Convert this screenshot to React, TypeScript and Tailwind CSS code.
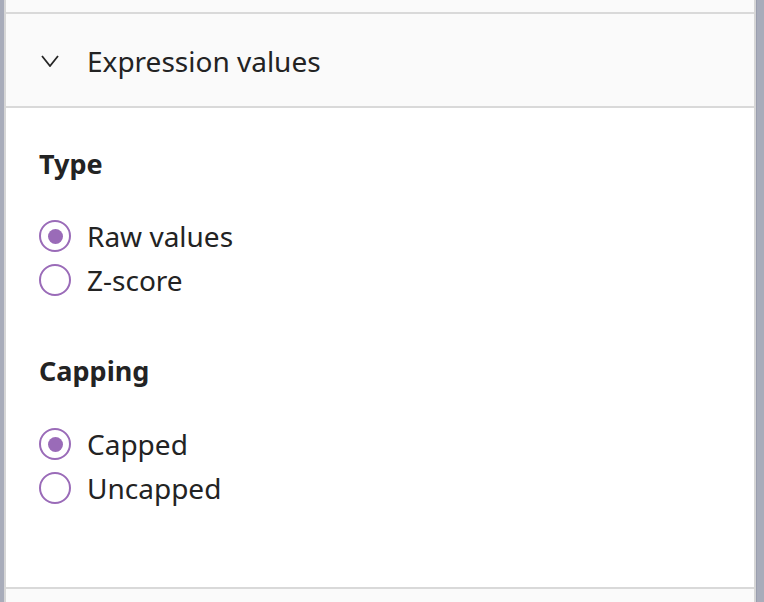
import React from "react";

function Radio({ checked, label }: { checked: boolean; label: string }) {
  return (
    <div className="flex items-center h-[44px]">
      <div className="w-[32px] h-[32px] rounded-full border-2 border-[#9a6bb8] flex items-center justify-center">
        {checked && <div className="w-[15px] h-[15px] rounded-full bg-[#9a6bb8]" />}
      </div>
      <span className="ml-[16px] text-[28px] leading-[34px] text-[#232323]">{label}</span>
    </div>
  );
}

export default function App() {
  return (
    <div
      className="w-[764px] h-[602px] flex bg-[#fafafa] overflow-hidden"
      style={{ fontFamily: '"Noto Sans", "Open Sans", sans-serif' }}
    >
      <div className="w-[4px] bg-[#a8acba]" />
      <div className="w-[2px] bg-[#d6d6d6]" />
      <div className="flex-1 flex flex-col">
        <div className="h-[12px] bg-[#fafafa]" />
        <div className="h-[2px] bg-[#d9d9d9]" />
        <div className="h-[92px] bg-[#fafafa] flex items-center pl-[35px]">
          <svg width="18" height="12" viewBox="0 0 18 12" fill="none" className="mt-[2px]">
            <path d="M1 1 L9 11 L17 1" stroke="#262626" strokeWidth="1.8" />
          </svg>
          <span className="ml-[28px] mt-[2px] text-[28px] leading-[36px] text-[#232323]">Expression values</span>
        </div>
        <div className="h-[2px] bg-[#d9d9d9]" />
        <div className="h-[479px] bg-white pl-[33px] pt-[39px]">
          <div className="text-[27px] font-bold text-[#232323] leading-[34px]">Type</div>
          <div className="mt-[33px]">
            <Radio checked label="Raw values" />
            <Radio checked={false} label="Z-score" />
          </div>
          <div className="mt-[52px] text-[27px] font-bold text-[#232323] leading-[34px]">Capping</div>
          <div className="mt-[34px]">
            <Radio checked label="Capped" />
            <Radio checked={false} label="Uncapped" />
          </div>
        </div>
        <div className="h-[2px] bg-[#d9d9d9]" />
        <div className="flex-1 bg-[#fafafa]" />
      </div>
      <div className="w-[2px] bg-[#d6d6d6]" />
      <div className="w-[1px] bg-[#9a9eae]" />
      <div className="w-[7px] bg-[#a8acba]" />
    </div>
  );
}
